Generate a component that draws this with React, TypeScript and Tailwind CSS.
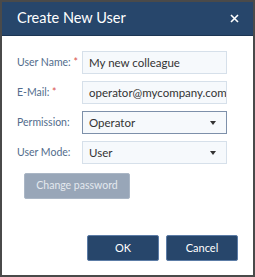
import React from "react"

function Caret() {
  return (
    <svg width="6" height="4" viewBox="0 0 6 4" className="shrink-0">
      <path d="M0 0h6L3 4z" fill="#333" />
    </svg>
  )
}

function Row({ label, required, children }: { label: string; required?: boolean; children: React.ReactNode }) {
  return (
    <div className="flex items-center">
      <div className="w-[65px] shrink-0 whitespace-nowrap text-[10.5px] text-[#526c8c]">
        {label}
        {required && <span className="text-[#d9534f]"> *</span>}
      </div>
      {children}
    </div>
  )
}

export default function App() {
  const font = { fontFamily: 'Lato, "Open Sans", sans-serif' }
  return (
    <div className="w-[255px] h-[277px] border-2 border-[#4a4a4a] bg-white flex flex-col" style={font}>
      <div className="h-[34px] bg-[#27466b] flex items-center justify-between pl-[15px] pr-[14px] border-b border-[#1c3553]">
        <span className="text-white text-[14.5px] leading-none">Create New User</span>
        <svg width="9" height="9" viewBox="0 0 9 9">
          <path d="M1 1l7 7M8 1l-7 7" stroke="white" strokeWidth="1.6" />
        </svg>
      </div>
      <div className="flex flex-col gap-[7px] pt-[15px] pl-[15px] flex-1">
        <Row label="User Name:" required>
          <div className="w-[145px] h-[23px] border border-[#d6e0ea] bg-[#f6f9fc] flex items-center px-[6px] text-[11.5px] text-[#333]">
            My new colleague
          </div>
        </Row>
        <Row label="E-Mail:" required>
          <div className="w-[145px] h-[23px] border border-[#d6e0ea] bg-[#f6f9fc] flex items-center px-[6px] text-[11.5px] text-[#333] whitespace-nowrap overflow-hidden">
            operator@mycompany.com
          </div>
        </Row>
        <Row label="Permission:">
          <div className="w-[145px] h-[23px] border border-[#7d90aa] bg-[#f6f9fc] flex items-center justify-between px-[6px] pr-[10px] text-[11.5px] text-[#333]">
            Operator
            <Caret />
          </div>
        </Row>
        <Row label="User Mode:">
          <div className="w-[145px] h-[23px] border border-[#d6e0ea] bg-[#f6f9fc] flex items-center justify-between px-[6px] pr-[10px] text-[11.5px] text-[#333]">
            User
            <Caret />
          </div>
        </Row>
        <div className="pl-[7px]">
          <button className="w-[106px] h-[26px] rounded-[2px] bg-[#98a6b8] border border-[#aab6c5] text-[10.5px] text-[#e4e9ef]">
            Change password
          </button>
        </div>
      </div>
      <div className="flex justify-end gap-[7px] pr-[15px] pb-[14px]">
        <button className="w-[72px] h-[26px] rounded-[2px] bg-[#27466b] border border-[#5c7ca6] text-[11px] text-white">
          OK
        </button>
        <button className="w-[72px] h-[26px] rounded-[2px] bg-[#27466b] border border-[#5c7ca6] text-[11px] text-white">
          Cancel
        </button>
      </div>
    </div>
  )
}
